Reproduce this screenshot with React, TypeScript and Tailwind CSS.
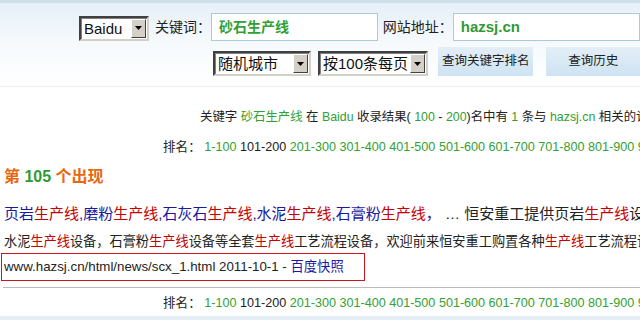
import React from "react";

const cjk = "font-['Liberation_Sans','Noto_Sans_CJK_SC',sans-serif]";

function FakeSelect({ label, width }: { label: string; width: string }) {
  return (
    <div
      className={`${width} h-[25px] flex items-stretch bg-white border-2 border-t-[#404040] border-l-[#404040] border-b-[#d4d0c8] border-r-[#d4d0c8] shadow-[inset_1px_1px_0_#808080]`}
    >
      <div className="flex-1 pl-[3px] text-[15px] leading-[21px] text-[#111] whitespace-nowrap overflow-hidden">
        {label}
      </div>
      <div className="w-[15px] m-[1px] bg-[#d4d0c8] border border-t-white border-l-white border-b-[#404040] border-r-[#404040] flex items-center justify-center">
        <svg width="7" height="4" viewBox="0 0 7 4">
          <path d="M0 0h7L3.5 4z" fill="#000" />
        </svg>
      </div>
    </div>
  );
}

function Ranks() {
  const groups = ["1-100", "101-200", "201-300", "301-400", "401-500", "501-600", "601-700", "701-800", "801-900", "901-1000"];
  return (
    <div className="h-[20px] leading-[20px] pl-[163px] text-[12.6px] whitespace-nowrap text-[#222]">
      排名：
      {groups.map((g, i) => (
        <span key={g} className={i === 1 ? "text-[#222]" : "text-[#33a033]"}>
          {" "}
          {g}
        </span>
      ))}
    </div>
  );
}

const R = ({ children }: { children: React.ReactNode }) => (
  <span className="text-[#c40000]">{children}</span>
);

export default function App() {
  return (
    <div className={`w-[640px] h-[320px] overflow-hidden bg-white ${cjk}`}>
      {/* 顶部查询区 */}
      <div className="h-[87px] border-b border-[#ececec] border-t-[3px] border-t-[#cfe0ec] bg-gradient-to-b from-[#e6f0f8] via-[#f6fafd] to-white">
        <div className="flex items-center pl-[79px] pt-[10px] whitespace-nowrap">
          <div className="mt-[2px]">
            <FakeSelect label="Baidu" width="w-[70px]" />
          </div>
          <span className="ml-[6px] w-[56px] text-[14px] text-[#222]">关键词：</span>
          <div className="w-[178px] h-[28px] border border-[#a9cbdc] bg-white pl-[7px] text-[14px] leading-[26px] font-bold text-[#33a033]">
            砂石生产线
          </div>
          <span className="ml-[5px] w-[70px] text-[14px] text-[#222]">网站地址：</span>
          <div className="w-[200px] h-[28px] border border-[#a9cbdc] bg-white pl-[7px] text-[15px] leading-[26px] font-bold text-[#2f9a35]">
            hazsj.cn
          </div>
        </div>
        <div className="flex items-start pl-[213px] pt-[6px] whitespace-nowrap">
          <div className="mt-[4px]">
            <FakeSelect label="随机城市" width="w-[98px]" />
          </div>
          <div className="ml-[7px] mt-[4px]">
            <FakeSelect label="按100条每页" width="w-[110px]" />
          </div>
          <button className="ml-[10px] w-[100px] h-[29px] bg-gradient-to-b from-[#e3eef7] to-[#cfe3f2] text-[12.5px] text-[#222]">
            查询关键字排名
          </button>
          <button className="ml-[13px] w-[98px] h-[29px] bg-gradient-to-b from-[#e3eef7] to-[#cfe3f2] text-[12.5px] text-[#222]">
            查询历史
          </button>
        </div>
      </div>

      {/* 结果摘要 */}
      <div className="mt-[20px] h-[20px] leading-[20px] pl-[200px] text-[12.4px] whitespace-nowrap text-[#222]">
        关键字 <span className="text-[#33a033]">砂石生产线</span> 在{" "}
        <span className="text-[#33a033]">Baidu</span> 收录结果({" "}
        <span className="text-[#33a033]">100</span> -{" "}
        <span className="text-[#33a033]">200</span>)名中有{" "}
        <span className="text-[#33a033]">1</span> 条与{" "}
        <span className="text-[#33a033]">hazsj.cn</span> 相关的记录
      </div>
      <div className="mt-[10px]">
        <Ranks />
      </div>

      {/* 出现位置 */}
      <div className="mt-[10px] h-[20px] leading-[20px] pl-[4px] text-[16px] font-bold text-[#e8680f] whitespace-nowrap">
        第 <span className="text-[#2f9a35]">105</span> 个出现
      </div>

      <div className="mt-[17px] h-[20px] leading-[20px] pl-[4px] text-[15px] text-[#1a1aa0] whitespace-nowrap">
        页岩<R>生产线</R>,磨粉<R>生产线</R>,石灰石<R>生产线</R>,水泥<R>生产线</R>,石膏粉<R>生产线</R>，
        <span className="text-[#222]">
          {" "}… 恒安重工提供页岩<R>生产线</R>设备,石灰石<R>生产线</R>设备
        </span>
      </div>
      <div className="mt-[8px] h-[20px] leading-[20px] pl-[4px] text-[13.2px] text-[#222] whitespace-nowrap">
        水泥<R>生产线</R>设备，石膏粉<R>生产线</R>设备等全套<R>生产线</R>工艺流程设备，欢迎前来恒安重工购置各种<R>生产线</R>工艺流程设备
      </div>

      {/* 网址框 */}
      <div className="mt-[1px] ml-[1px] w-[364px] h-[28px] border border-[#c8161e] pl-[2px] text-[13.3px] leading-[26px] text-[#222] whitespace-nowrap">
        www.hazsj.cn/html/news/scx_1.html 2011-10-1 -{" "}
        <span className="text-[#1a1aa0]">百度快照</span>
      </div>

      <div className="mt-[6px] ml-[3px] border-t border-[#bbbbbb]" />
      <div className="mt-[5px]">
        <Ranks />
      </div>
      <div className="mt-[3px] h-[6px] bg-[#e6eef5]" />
    </div>
  );
}
